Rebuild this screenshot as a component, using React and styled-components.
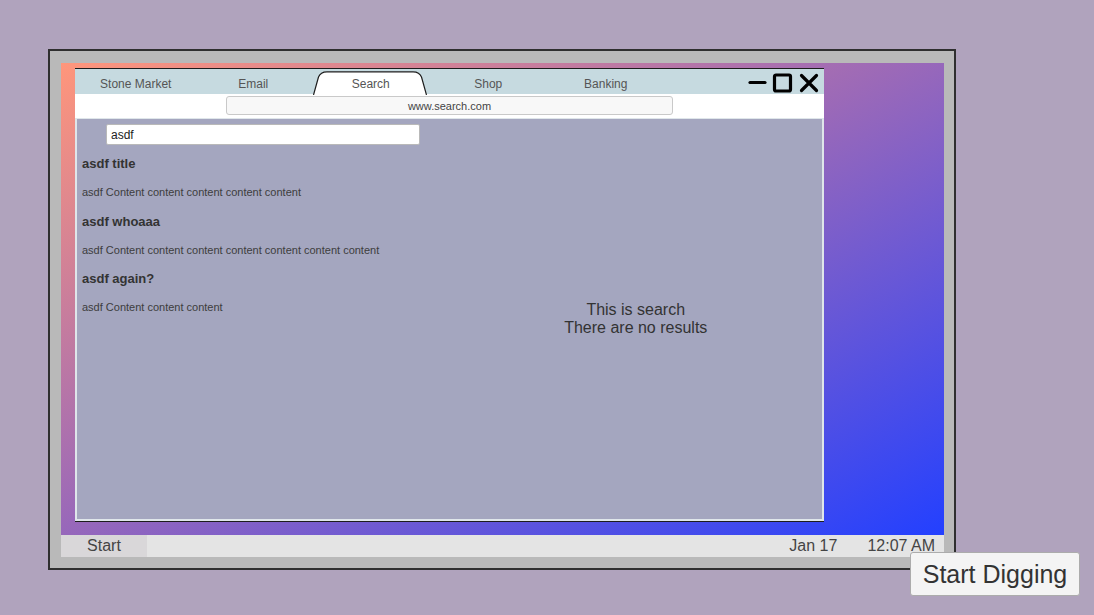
import React from 'react';
import styled, { createGlobalStyle } from 'styled-components';

const tabs = ['Stone Market', 'Email', 'Search', 'Shop', 'Banking'];

const results = [
  { title: 'asdf title', body: 'asdf Content content content content content' },
  { title: 'asdf whoaaa', body: 'asdf Content content content content content content content' },
  { title: 'asdf again?', body: 'asdf Content content content' },
];

const TabShape = () => (
  <TabSvg viewBox="0 0 114 24" preserveAspectRatio="none">
    <path
      d="M0.5 24 L5.5 6 Q7.5 0.8 14 0.8 L100 0.8 Q106.5 0.8 108.5 6 L113.5 24"
      fill="#ffffff"
      stroke="#1e1e1e"
      strokeWidth="1.2"
    />
  </TabSvg>
);

const WindowControls = () => (
  <Controls viewBox="0 0 72 20">
    <g stroke="#000" strokeWidth="3.2" fill="none" strokeLinecap="round" strokeLinejoin="round">
      <path d="M3 9.5 L18 9.5" />
      <rect x="27.5" y="2" width="16" height="16" rx="1.5" />
      <path d="M54.5 2.5 L69.5 17.5 M69.5 2.5 L54.5 17.5" />
    </g>
  </Controls>
);

export default function App() {
  return (
    <>
      <GlobalStyle />
      <Page>
        <Monitor>
          <Screen>
            <Window>
              <TabBar>
                {tabs.map((t) => (
                  <Tab key={t}>
                    {t === 'Search' && <TabShape />}
                    <TabLabel>{t}</TabLabel>
                  </Tab>
                ))}
                <WindowControls />
              </TabBar>
              <UrlRow>
                <UrlBar>www.search.com</UrlBar>
              </UrlRow>
              <Content>
                <ResultsColumn>
                  <SearchInput defaultValue="asdf" />
                  {results.map((r) => (
                    <Result key={r.title}>
                      <ResultTitle>{r.title}</ResultTitle>
                      <ResultBody>{r.body}</ResultBody>
                    </Result>
                  ))}
                </ResultsColumn>
                <InfoColumn>
                  <InfoText>
                    This is search
                    <br />
                    There are no results
                  </InfoText>
                </InfoColumn>
              </Content>
            </Window>
          </Screen>
          <Taskbar>
            <StartButton>Start</StartButton>
            <Tray>
              <span>Jan 17</span>
              <span>12:07 AM</span>
            </Tray>
          </Taskbar>
        </Monitor>
        <DigButton>Start Digging</DigButton>
      </Page>
    </>
  );
}

// styles
const GlobalStyle = createGlobalStyle`
  html, body {
    margin: 0;
    padding: 0;
    width: 1094px;
    height: 615px;
    overflow: hidden;
    background: #b0a3bd;
    font-family: "Liberation Sans", Arial, sans-serif;
  }
  * { box-sizing: border-box; }
`;

const Page = styled.div`
  position: relative;
  width: 1094px;
  height: 615px;
  padding: 49px 0 0 48px;
`;

const Monitor = styled.div`
  width: 908px;
  height: 521px;
  border: 2px solid #2f2f2f;
  background: #b9b9b9;
  padding: 12px 10px 11px 11px;
  display: flex;
  flex-direction: column;
`;

const Screen = styled.div`
  height: 472px;
  background: linear-gradient(to bottom right, #ff967b 0%, #9b69b8 48%, #2340ff 100%);
  padding: 5px 0 0 14px;
`;

const Window = styled.div`
  width: 749px;
  height: 453px;
  display: flex;
  flex-direction: column;
  border-top: 1px solid #1d1d1d;
  box-shadow: 0 1px 0 #1d1d1d;
`;

const TabBar = styled.div`
  height: 25px;
  background: #c6dae0;
  display: flex;
  align-items: stretch;
  padding: 0 5px 0 2px;
`;

const Tab = styled.div`
  position: relative;
  width: 117.5px;
  display: flex;
  justify-content: center;
  align-items: center;
  padding-top: 4px;
  font-size: 12px;
  color: #555;
`;

const TabSvg = styled.svg`
  position: absolute;
  left: 1px;
  top: 2px;
  width: 114px;
  height: 24px;
`;

const TabLabel = styled.span`
  position: relative;
`;

const Controls = styled.svg`
  margin-left: auto;
  width: 72px;
  height: 20px;
  align-self: center;
  margin-top: 2px;
`;

const UrlRow = styled.div`
  height: 24px;
  background: #ffffff;
  display: flex;
  justify-content: center;
  padding-top: 2px;
`;

const UrlBar = styled.div`
  width: 447px;
  height: 19px;
  background: #f8f8f8;
  border: 1px solid #c9c9c9;
  border-radius: 3px;
  font-size: 11px;
  color: #444;
  display: flex;
  align-items: center;
  justify-content: center;
`;

const Content = styled.div`
  flex: 1;
  background: #a4a6bf;
  border: 2px solid #dfe6ea;
  border-top: 1px solid #dfe6ea;
  display: grid;
  grid-template-columns: 1fr 1fr;
`;

const ResultsColumn = styled.div`
  padding: 5px 0 0 5px;
  display: flex;
  flex-direction: column;
  align-items: flex-start;
`;

const SearchInput = styled.input`
  width: 314px;
  height: 21px;
  margin: 0 0 11px 24px;
  border: 1px solid #b9b9b9;
  border-radius: 2px;
  background: #fff;
  padding: 0 4px;
  font-family: inherit;
  font-size: 12px;
  color: #222;
  outline: none;
`;

const Result = styled.div`
  margin-bottom: 13.5px;
`;

const ResultTitle = styled.div`
  font-size: 13px;
  font-weight: bold;
  line-height: 16px;
  color: #333;
  margin-bottom: 13px;
`;

const ResultBody = styled.div`
  font-size: 11px;
  line-height: 15px;
  color: #3d3d3d;
`;

const InfoColumn = styled.div`
  display: flex;
  align-items: center;
  justify-content: center;
`;

const InfoText = styled.div`
  font-size: 16px;
  line-height: 18px;
  color: #333;
  text-align: center;
`;

const Taskbar = styled.div`
  height: 22px;
  background: #e4e4e4;
  display: flex;
  align-items: stretch;
  font-size: 16px;
  color: #444;
`;

const StartButton = styled.div`
  width: 86px;
  background: #d9d7d9;
  display: flex;
  align-items: center;
  justify-content: center;
`;

const Tray = styled.div`
  margin-left: auto;
  display: flex;
  align-items: center;
  gap: 30px;
  padding-right: 9px;
`;

const DigButton = styled.button`
  position: absolute;
  left: 910px;
  top: 552px;
  width: 170px;
  height: 44px;
  background: #f4f4f4;
  border: 1px solid #acacac;
  border-radius: 3px;
  font-family: "Liberation Sans", Arial, sans-serif;
  font-size: 25px;
  color: #333;
  padding: 0;
`;
